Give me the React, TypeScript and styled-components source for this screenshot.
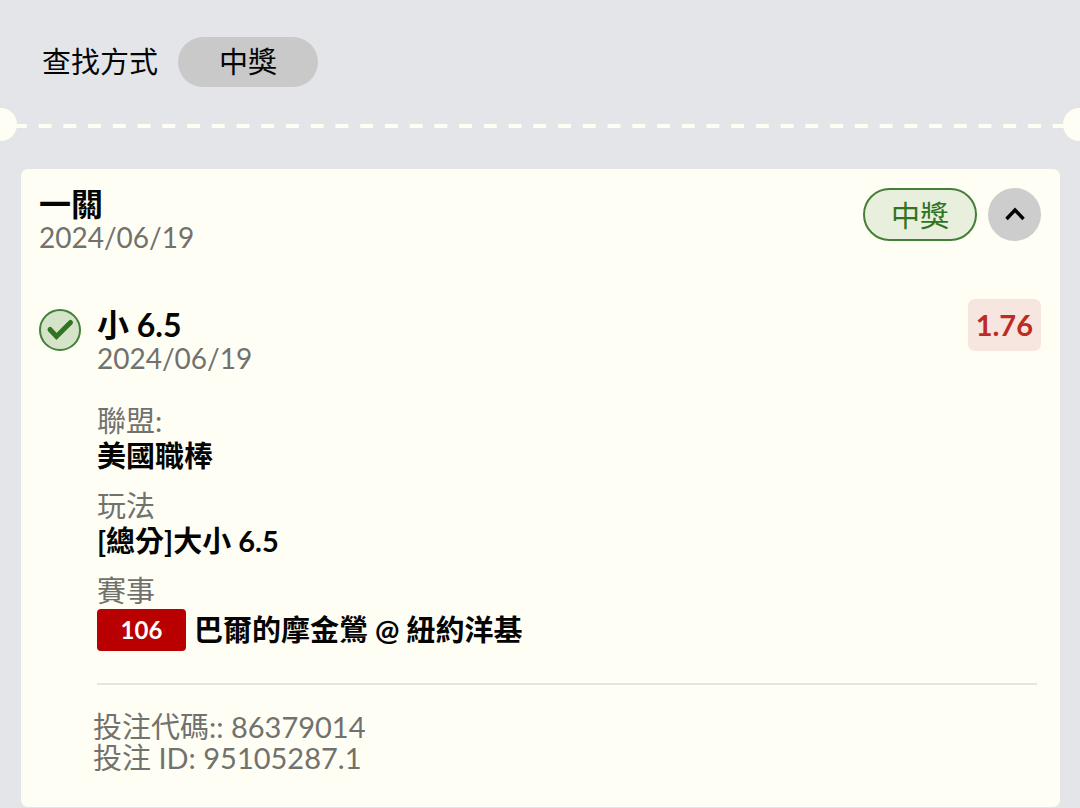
import React from "react";
import styled, { createGlobalStyle } from "styled-components";

const color = {
  page: "#e4e5e8",
  paper: "#fffef5",
  ink: "#050505",
  muted: "#71716d",
  chip: "#c9c9c9",
  green: "#2f7420",
  greenEdge: "#437f38",
  greenSoft: "#e9efdd",
  red: "#bd2c22",
  redSoft: "#f7e5df",
  redSolid: "#b90000",
  rule: "#e6e4de",
};

const GlobalStyle = createGlobalStyle`
  *, *::before, *::after { box-sizing: border-box; }
  body {
    margin: 0;
    background: ${color.page};
    color: ${color.ink};
    font-family: Lato, "Noto Sans CJK TC", sans-serif;
    font-size: 29px;
    line-height: 34px;
  }
  button { font: inherit; color: inherit; border: 0; cursor: pointer; }
  h2, h3, p, dl, dd { margin: 0; }
`;

const FilterBar = styled.header`
  display: flex;
  align-items: center;
  gap: 20px;
  padding: 37px 42px 21px;
`;

const FilterButton = styled.button`
  height: 50px;
  padding: 0 41px;
  border-radius: 25px;
  background: ${color.chip};
`;

const Perforation = styled.div`
  display: flex;
  align-items: center;
  justify-content: space-between;
`;

const Notch = styled.span<{ $side: "left" | "right" }>`
  flex: none;
  width: 17px;
  height: 33px;
  background: ${color.paper};
  border-radius: ${(p) => (p.$side === "left" ? "0 17px 17px 0" : "17px 0 0 17px")};
`;

const Dashes = styled.span`
  flex: 1;
  height: 4px;
  margin: 3px -9px 0;
  background: linear-gradient(
      90deg,
      transparent 25%,
      ${color.paper} 25%,
      ${color.paper} 75%,
      transparent 75%
    )
    0 0 / 25px 4px round;
`;

const Card = styled.article`
  margin: 28px 20px 0 21px;
  padding: 18px 19px 34px 18px;
  border-radius: 7px;
  background: ${color.paper};
`;

const CardHeader = styled.header`
  display: flex;
  align-items: flex-start;
`;

const Heading = styled.div`
  flex: 1;
`;

const Title = styled.h2`
  font-size: 32px;
  font-weight: 700;
  line-height: 33px;
`;

const DateText = styled.p`
  color: ${color.muted};
  font-size: 28px;
`;

const HeaderActions = styled.div`
  display: flex;
  gap: 11px;
  padding-top: 1px;
`;

const StatusPill = styled.span`
  display: flex;
  align-items: center;
  height: 53px;
  padding: 3px 26px 0;
  border: 2px solid ${color.greenEdge};
  border-radius: 27px;
  background: ${color.greenSoft};
  color: ${color.green};
`;

const CollapseButton = styled.button`
  display: grid;
  place-items: center;
  width: 53px;
  height: 53px;
  padding: 0 0 2px;
  border-radius: 50%;
  background: #cdcdcd;
`;

const Leg = styled.section`
  display: grid;
  grid-template-columns: 42px 1fr;
  column-gap: 16px;
  padding-top: 45px;
`;

const WonIcon = styled.svg`
  width: 42px;
  height: 42px;
  margin-top: 10px;
`;

const LegHeader = styled.div`
  display: flex;
  align-items: flex-start;
`;

const LegHeading = styled(Heading)`
  padding-top: 9px;
`;

const Odds = styled.span`
  padding: 9px 8px;
  border-radius: 7px;
  background: ${color.redSoft};
  color: ${color.red};
  font-weight: 700;
`;

const Fields = styled.dl`
  display: grid;
  gap: 16px;
  padding: 29px 0 32px;
`;

const Term = styled.dt`
  color: ${color.muted};
`;

const Detail = styled.dd`
  display: flex;
  align-items: center;
  gap: 8px;
  padding-top: 1px;
  font-weight: 700;
`;

const MatchNumber = styled.span`
  width: 89px;
  border-radius: 4px;
  background: ${color.redSolid};
  color: #fff;
  font-size: 24px;
  line-height: 42px;
  text-align: center;
`;

const Rule = styled.hr`
  height: 2px;
  margin: 0 4px 0 0;
  border: 0;
  background: ${color.rule};
`;

const Codes = styled.div`
  padding-top: 26px;
  margin-left: -4px;
  color: ${color.muted};
  line-height: 31px;
`;

export default function App() {
  return (
    <>
      <GlobalStyle />
      <FilterBar>
        <span>查找方式</span>
        <FilterButton type="button">中獎</FilterButton>
      </FilterBar>
      <Perforation>
        <Notch $side="left" />
        <Dashes />
        <Notch $side="right" />
      </Perforation>
      <Card>
        <CardHeader>
          <Heading>
            <Title>一關</Title>
            <DateText>2024/06/19</DateText>
          </Heading>
          <HeaderActions>
            <StatusPill>中獎</StatusPill>
            <CollapseButton type="button" aria-label="收合">
              <svg width="20" height="14" viewBox="0 0 20 14" fill="none" stroke="#000" strokeWidth="3.4">
                <path d="M1.5 12 L10 3 L18.5 12" />
              </svg>
            </CollapseButton>
          </HeaderActions>
        </CardHeader>
        <Leg>
          <WonIcon viewBox="0 0 42 42" aria-hidden="true">
            <circle cx="21" cy="21" r="20" fill="#d5e3c8" stroke={color.greenEdge} strokeWidth="2" />
            <path
              d="M11 20.5 L17.5 27.5 L31.5 13.5"
              fill="none"
              stroke={color.green}
              strokeWidth="5"
              strokeLinecap="round"
            />
          </WonIcon>
          <div>
            <LegHeader>
              <LegHeading>
                <Title as="h3">小 6.5</Title>
                <DateText>2024/06/19</DateText>
              </LegHeading>
              <Odds>1.76</Odds>
            </LegHeader>
            <Fields>
              <div>
                <Term>聯盟:</Term>
                <Detail>美國職棒</Detail>
              </div>
              <div>
                <Term>玩法</Term>
                <Detail>[總分]大小 6.5</Detail>
              </div>
              <div>
                <Term>賽事</Term>
                <Detail>
                  <MatchNumber>106</MatchNumber>
                  <span>巴爾的摩金鶯 @ 紐約洋基</span>
                </Detail>
              </div>
            </Fields>
            <Rule />
            <Codes>
              <p>投注代碼:: 86379014</p>
              <p>投注 ID: 95105287.1</p>
            </Codes>
          </div>
        </Leg>
      </Card>
    </>
  );
}
